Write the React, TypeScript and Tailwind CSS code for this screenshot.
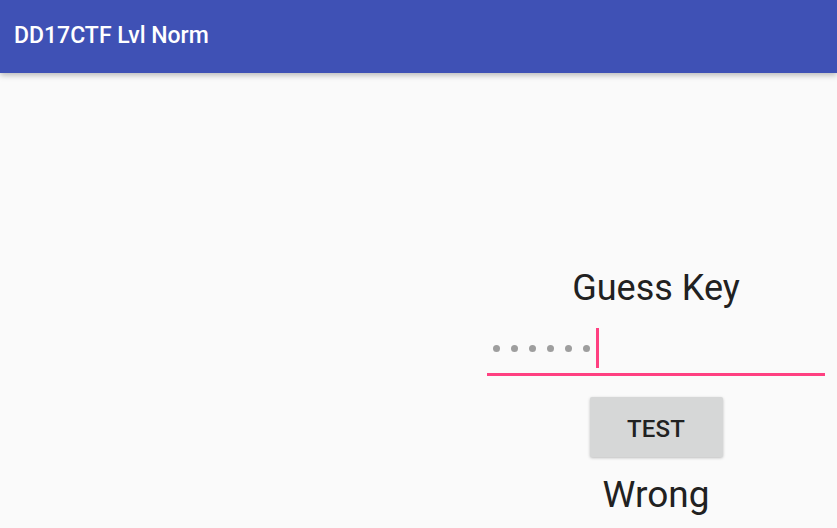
import React from "react";

const Dots: React.FC<{ count: number }> = ({ count }) => (
  <div className="flex items-center gap-[11px]">
    {Array.from({ length: count }).map((_, i) => (
      <span key={i} className="block w-[7px] h-[7px] rounded-full bg-[#9e9e9e]" />
    ))}
  </div>
);

export default function App() {
  return (
    <div
      className="w-[837px] h-[528px] overflow-hidden bg-[#fafafa] flex flex-col"
      style={{ fontFamily: "Roboto, 'Liberation Sans', sans-serif" }}
    >
      <header className="relative z-10 h-[73px] shrink-0 bg-[#3f51b5] flex items-center pl-[14px] pb-[2px] shadow-[0_2px_6px_rgba(0,0,0,0.28)]">
        <h1 className="text-[23px] font-medium text-white leading-none">DD17CTF Lvl Norm</h1>
      </header>

      <main className="flex-1 flex justify-end pr-[12px] pt-[194px]">
        <div className="w-[338px] flex flex-col items-center">
          <p className="text-[36px] leading-[42px] text-[#212121]">Guess Key</p>

          <div className="mt-[9px] w-full border-b-[3px] border-[#ff4081] pt-[10px] pb-[5px] pl-[6px]">
            <div className="h-[40px] flex items-center gap-[6px]">
              <Dots count={6} />
              <span className="block w-[3px] h-[40px] bg-[#ff4081]" />
            </div>
          </div>

          <button className="mt-[21px] w-[133px] h-[60px] pt-[3px] rounded-[2px] bg-[#d6d7d7] shadow-[0_1px_3px_rgba(0,0,0,0.25)] text-[24px] font-medium text-[#212121] tracking-[0.2px]">
            TEST
          </button>

          <p className="mt-[16px] text-[37px] leading-[43px] text-[#212121]">Wrong</p>
        </div>
      </main>
    </div>
  );
}
